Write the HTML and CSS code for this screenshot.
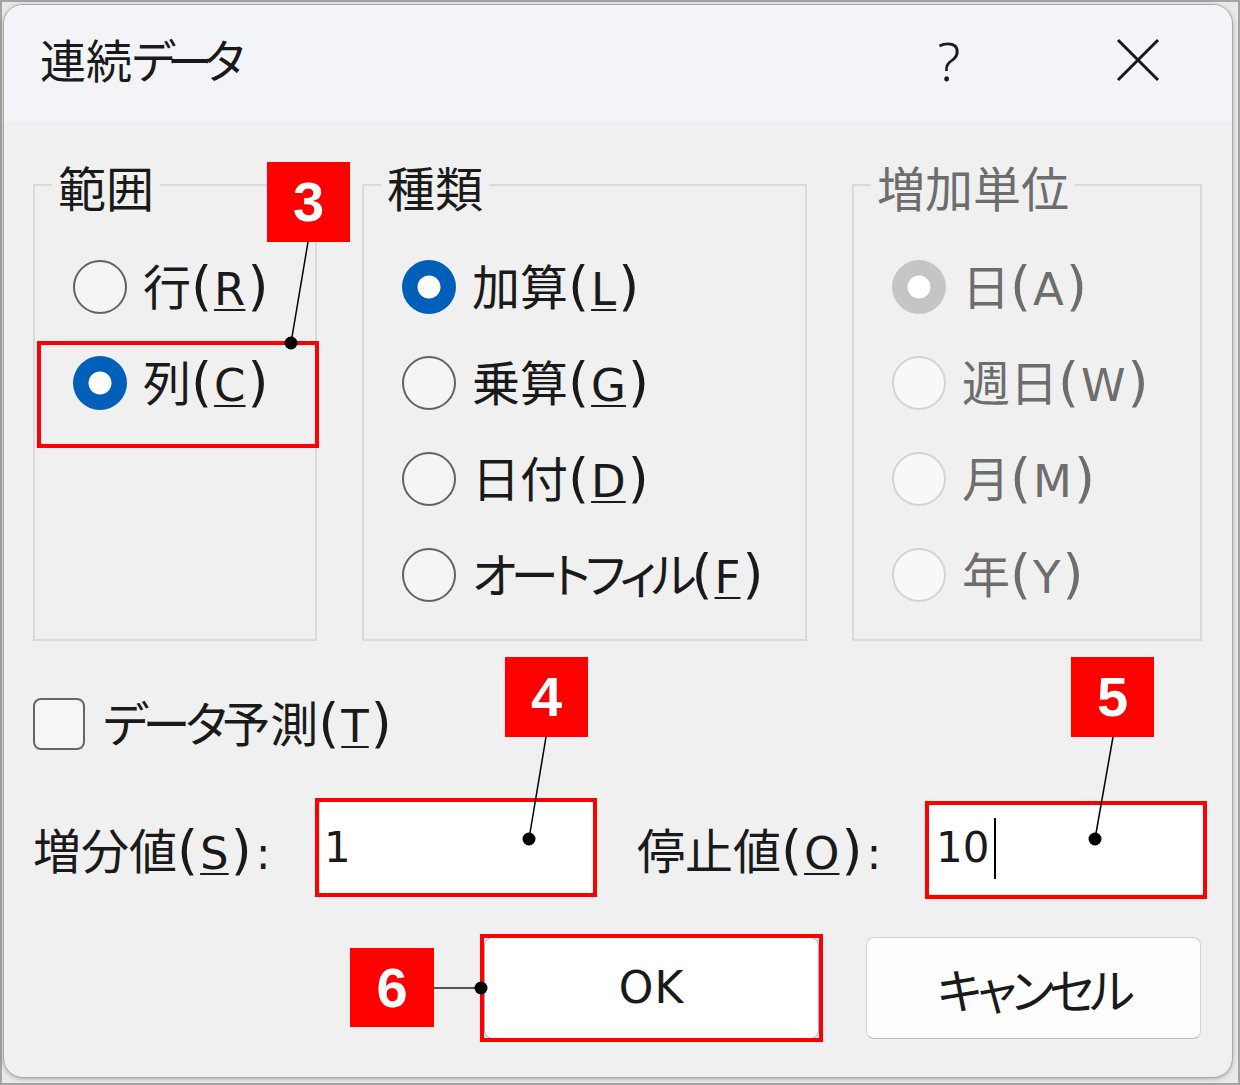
FILE: index.html
```html
<!DOCTYPE html>
<html lang="ja">
<head>
<meta charset="utf-8">
<title>連続データ</title>
<link rel="stylesheet" href="styles.css">
</head>
<body>
<div class="screen">
  <div class="window">
    <div class="titlebar">
      <div class="title">連続<span class="kana">データ</span></div>
      <div class="help">?</div>
      <svg class="close" viewBox="0 0 44 44"><path d="M2 2L42 42M42 2L2 42"/></svg>
    </div>
    <div class="body">
      <div class="groups">
        <div class="group g-range">
          <div class="group-title">範囲</div>
          <div class="options">
            <div class="option"><span class="radio"></span><span class="label">行<span class="acc">(<u class="k">R</u>)</span></span></div>
            <div class="option"><span class="radio checked"></span><span class="label">列<span class="acc">(<u class="k">C</u>)</span></span></div>
          </div>
        </div>
        <div class="group g-type">
          <div class="group-title">種類</div>
          <div class="options">
            <div class="option"><span class="radio checked"></span><span class="label">加算<span class="acc">(<u class="k">L</u>)</span></span></div>
            <div class="option"><span class="radio"></span><span class="label">乗算<span class="acc">(<u class="k">G</u>)</span></span></div>
            <div class="option"><span class="radio"></span><span class="label">日付<span class="acc">(<u class="k">D</u>)</span></span></div>
            <div class="option"><span class="radio"></span><span class="label"><span class="kana">オートフィル</span><span class="acc">(<u class="k">F</u>)</span></span></div>
          </div>
        </div>
        <div class="group g-unit disabled">
          <div class="group-title">増加単位</div>
          <div class="options">
            <div class="option"><span class="radio dis-checked"></span><span class="label">日<span class="acc">(<span class="k">A</span>)</span></span></div>
            <div class="option"><span class="radio dis"></span><span class="label">週日<span class="acc">(<span class="k">W</span>)</span></span></div>
            <div class="option"><span class="radio dis"></span><span class="label">月<span class="acc">(<span class="k">M</span>)</span></span></div>
            <div class="option"><span class="radio dis"></span><span class="label">年<span class="acc">(<span class="k">Y</span>)</span></span></div>
          </div>
        </div>
      </div>
      <div class="predict">
        <span class="checkbox"></span>
        <span class="label"><span class="kana">データ</span>予測<span class="acc">(<u class="k">T</u>)</span></span>
      </div>
      <div class="fields">
        <div class="f-label f-label1">増分値<span class="acc">(<u class="k">S</u>)<span class="colon">:</span></span></div>
        <div class="textbox tb1">1</div>
        <div class="f-label f-label2">停止値<span class="acc">(<u class="k">O</u>)<span class="colon">:</span></span></div>
        <div class="textbox tb2">10<span class="caret"></span></div>
      </div>
      <div class="buttons">
        <div class="btn primary"><span class="latin">OK</span></div>
        <div class="btn"><span class="kana">キャンセル</span></div>
      </div>
    </div>
  </div>

  <div class="mark mark-col"></div>
  <div class="mark mark-step"></div>
  <div class="mark mark-stop"></div>
  <div class="mark mark-ok"></div>

  <div class="num num3">3</div>
  <div class="num num4">4</div>
  <div class="num num5">5</div>
  <div class="num num6">6</div>

  <svg class="leaders" viewBox="0 0 1240 1085">
    <line x1="308" y1="242" x2="291" y2="343"/>
    <circle cx="291" cy="343" r="6.5"/>
    <line x1="546" y1="737" x2="529" y2="839"/>
    <circle cx="529" cy="839" r="6.5"/>
    <line x1="1113" y1="737" x2="1095" y2="839"/>
    <circle cx="1095" cy="839" r="6.5"/>
    <line class="grey" x1="434" y1="988" x2="481" y2="988"/>
    <circle cx="481" cy="988" r="6.5"/>
  </svg>
</div>
</body>
</html>
```

FILE: styles.css
```css
* { box-sizing: border-box; }

html, body {
  margin: 0;
  padding: 0;
}

body {
  font-family: "Noto Sans CJK JP", sans-serif;
  color: #1a1a1a;
  font-feature-settings: "palt";
  background: #e8e8e8;
}

.screen {
  position: relative;
  width: 1240px;
  height: 1085px;
  overflow: hidden;
  padding: 4px 0 0 3px;
  background: #e9e9e9;
  box-shadow: inset 0 0 0 2px #a4a4a4;
}

.window {
  width: 1230px;
  height: 1074px;
  border: 1px solid #a9a9a9;
  border-radius: 20px;
  overflow: hidden;
  background: #f0f0f0;
  display: flex;
  flex-direction: column;
  box-shadow: 0 1px 4px rgba(0, 0, 0, 0.25);
}

.kana {
  letter-spacing: -5px;
}

/* accelerator part: tall parentheses around a smaller letter */
.acc {
  font-family: "DejaVu Sans", sans-serif;
  font-size: 54px;
}

.acc .k {
  font-size: 45px;
  margin: 0 2px;
}

.acc .colon {
  font-size: 44px;
  margin-left: 4px;
}

.latin {
  font-family: "DejaVu Sans", sans-serif;
  font-size: 44px;
  letter-spacing: 1px;
}

/* title bar */
.titlebar {
  flex: none;
  height: 118px;
  background: #f3f4f8;
  display: flex;
  align-items: center;
  padding: 0 72px 8px 36px;
}

.title {
  flex: 1;
  font-size: 46px;
  line-height: 56px;
  margin-bottom: 5px;
}

.title .kana {
  letter-spacing: -8px;
}

.help {
  width: 30px;
  text-align: center;
  font-family: "Noto Sans", sans-serif;
  font-size: 54px;
  line-height: 60px;
  font-weight: 300;
  margin-right: 152px;
}

.close {
  width: 44px;
  height: 44px;
  fill: none;
  stroke: #1a1a1a;
  stroke-width: 3;
}

/* body */
.body {
  flex: 1;
  padding: 0 31px 0 29px;
  font-size: 48px;
}

.groups {
  display: flex;
  gap: 45px;
  margin-top: 61px;
  height: 457px;
}

.group {
  flex: none;
  height: 457px;
  border: 2px solid #dadada;
}

.g-range { width: 284px; }
.g-type { width: 445px; }
.g-unit { width: 350px; }

.group-title {
  width: max-content;
  margin: -28px 0 0 17px;
  padding: 0 6px;
  background: #f0f0f0;
  line-height: 56px;
}

.options {
  padding: 25px 0 0 38px;
}

.option {
  display: flex;
  align-items: center;
  gap: 16px;
  height: 96px;
}

.label {
  line-height: 56px;
  white-space: nowrap;
}

u {
  text-decoration-thickness: 2px;
  text-underline-offset: 4px;
}

.disabled .group-title,
.disabled .label {
  color: #6d6d6d;
}

.radio {
  flex: none;
  width: 54px;
  height: 54px;
  border-radius: 50%;
  border: 2px solid #626262;
  background: #f5f5f5;
}

.radio.checked {
  border: none;
  background: radial-gradient(circle closest-side, #ffffff 0 41%, #005fb8 44%);
}

.radio.dis-checked {
  border: none;
  background: radial-gradient(circle closest-side, #ffffff 0 41%, #c5c5c5 44%);
}

.radio.dis {
  border-color: #d3d3d3;
  background: #f8f8f8;
}

/* checkbox row */
.predict {
  display: flex;
  align-items: center;
  gap: 18px;
  height: 54px;
  margin-top: 56px;
}

.checkbox {
  flex: none;
  width: 52px;
  height: 52px;
  border: 2px solid #666666;
  border-radius: 8px;
  background: #f6f6f6;
}

/* fields */
.fields {
  display: flex;
  align-items: center;
  height: 94px;
  margin-top: 50px;
}

.fields > * {
  flex: none;
}

.f-label {
  line-height: 56px;
  white-space: nowrap;
  padding-top: 6px;
}

.f-label1 { width: 286px; }
.f-label2 { width: 291px; margin-left: 43px; }

.textbox {
  height: 94px;
  background: #ffffff;
  border: 1px solid #e4e4e4;
  padding-left: 4px;
  display: flex;
  align-items: center;
  line-height: 56px;
  font-family: "DejaVu Sans", sans-serif;
  font-size: 42px;
}

.tb1 { width: 275px; }
.tb2 { width: 276px; padding-left: 7px; }

.caret {
  width: 2px;
  height: 61px;
  margin-left: 5px;
  background: #000000;
}

/* buttons */
.buttons {
  display: flex;
  justify-content: flex-end;
  gap: 47px;
  margin-top: 42px;
}

.btn {
  flex: none;
  width: 335px;
  height: 102px;
  border-radius: 8px;
  background: #fdfdfd;
  border: 1px solid #d3d3d3;
  border-bottom-color: #bdbdbd;
  display: flex;
  align-items: center;
  justify-content: center;
  line-height: 56px;
}

.btn.primary {
  background: #ffffff;
  border: 1px solid #7eb2e8;
}

/* annotations */
.mark {
  position: absolute;
  border: 4px solid #ff0000;
}

.mark-col { left: 37px; top: 341px; width: 282px; height: 107px; }
.mark-step { left: 315px; top: 798px; width: 282px; height: 99px; }
.mark-stop { left: 925px; top: 801px; width: 282px; height: 98px; }
.mark-ok { left: 480px; top: 934px; width: 343px; height: 108px; }

.num {
  position: absolute;
  width: 83px;
  height: 80px;
  background: #ff0000;
  color: #ffffff;
  font-family: "Liberation Sans", sans-serif;
  font-weight: bold;
  font-size: 56px;
  line-height: 80px;
  text-align: center;
}

.num3 { left: 267px; top: 162px; }
.num4 { left: 505px; top: 657px; }
.num5 { left: 1071px; top: 657px; }
.num6 { left: 350px; top: 948px; width: 84px; height: 79px; line-height: 79px; }

.leaders {
  position: absolute;
  left: 0;
  top: 0;
  width: 1240px;
  height: 1085px;
  pointer-events: none;
}

.leaders line {
  stroke: #000000;
  stroke-width: 1.5;
}

.leaders line.grey {
  stroke: #555555;
  stroke-width: 2;
}

.leaders circle {
  fill: #000000;
}
```
